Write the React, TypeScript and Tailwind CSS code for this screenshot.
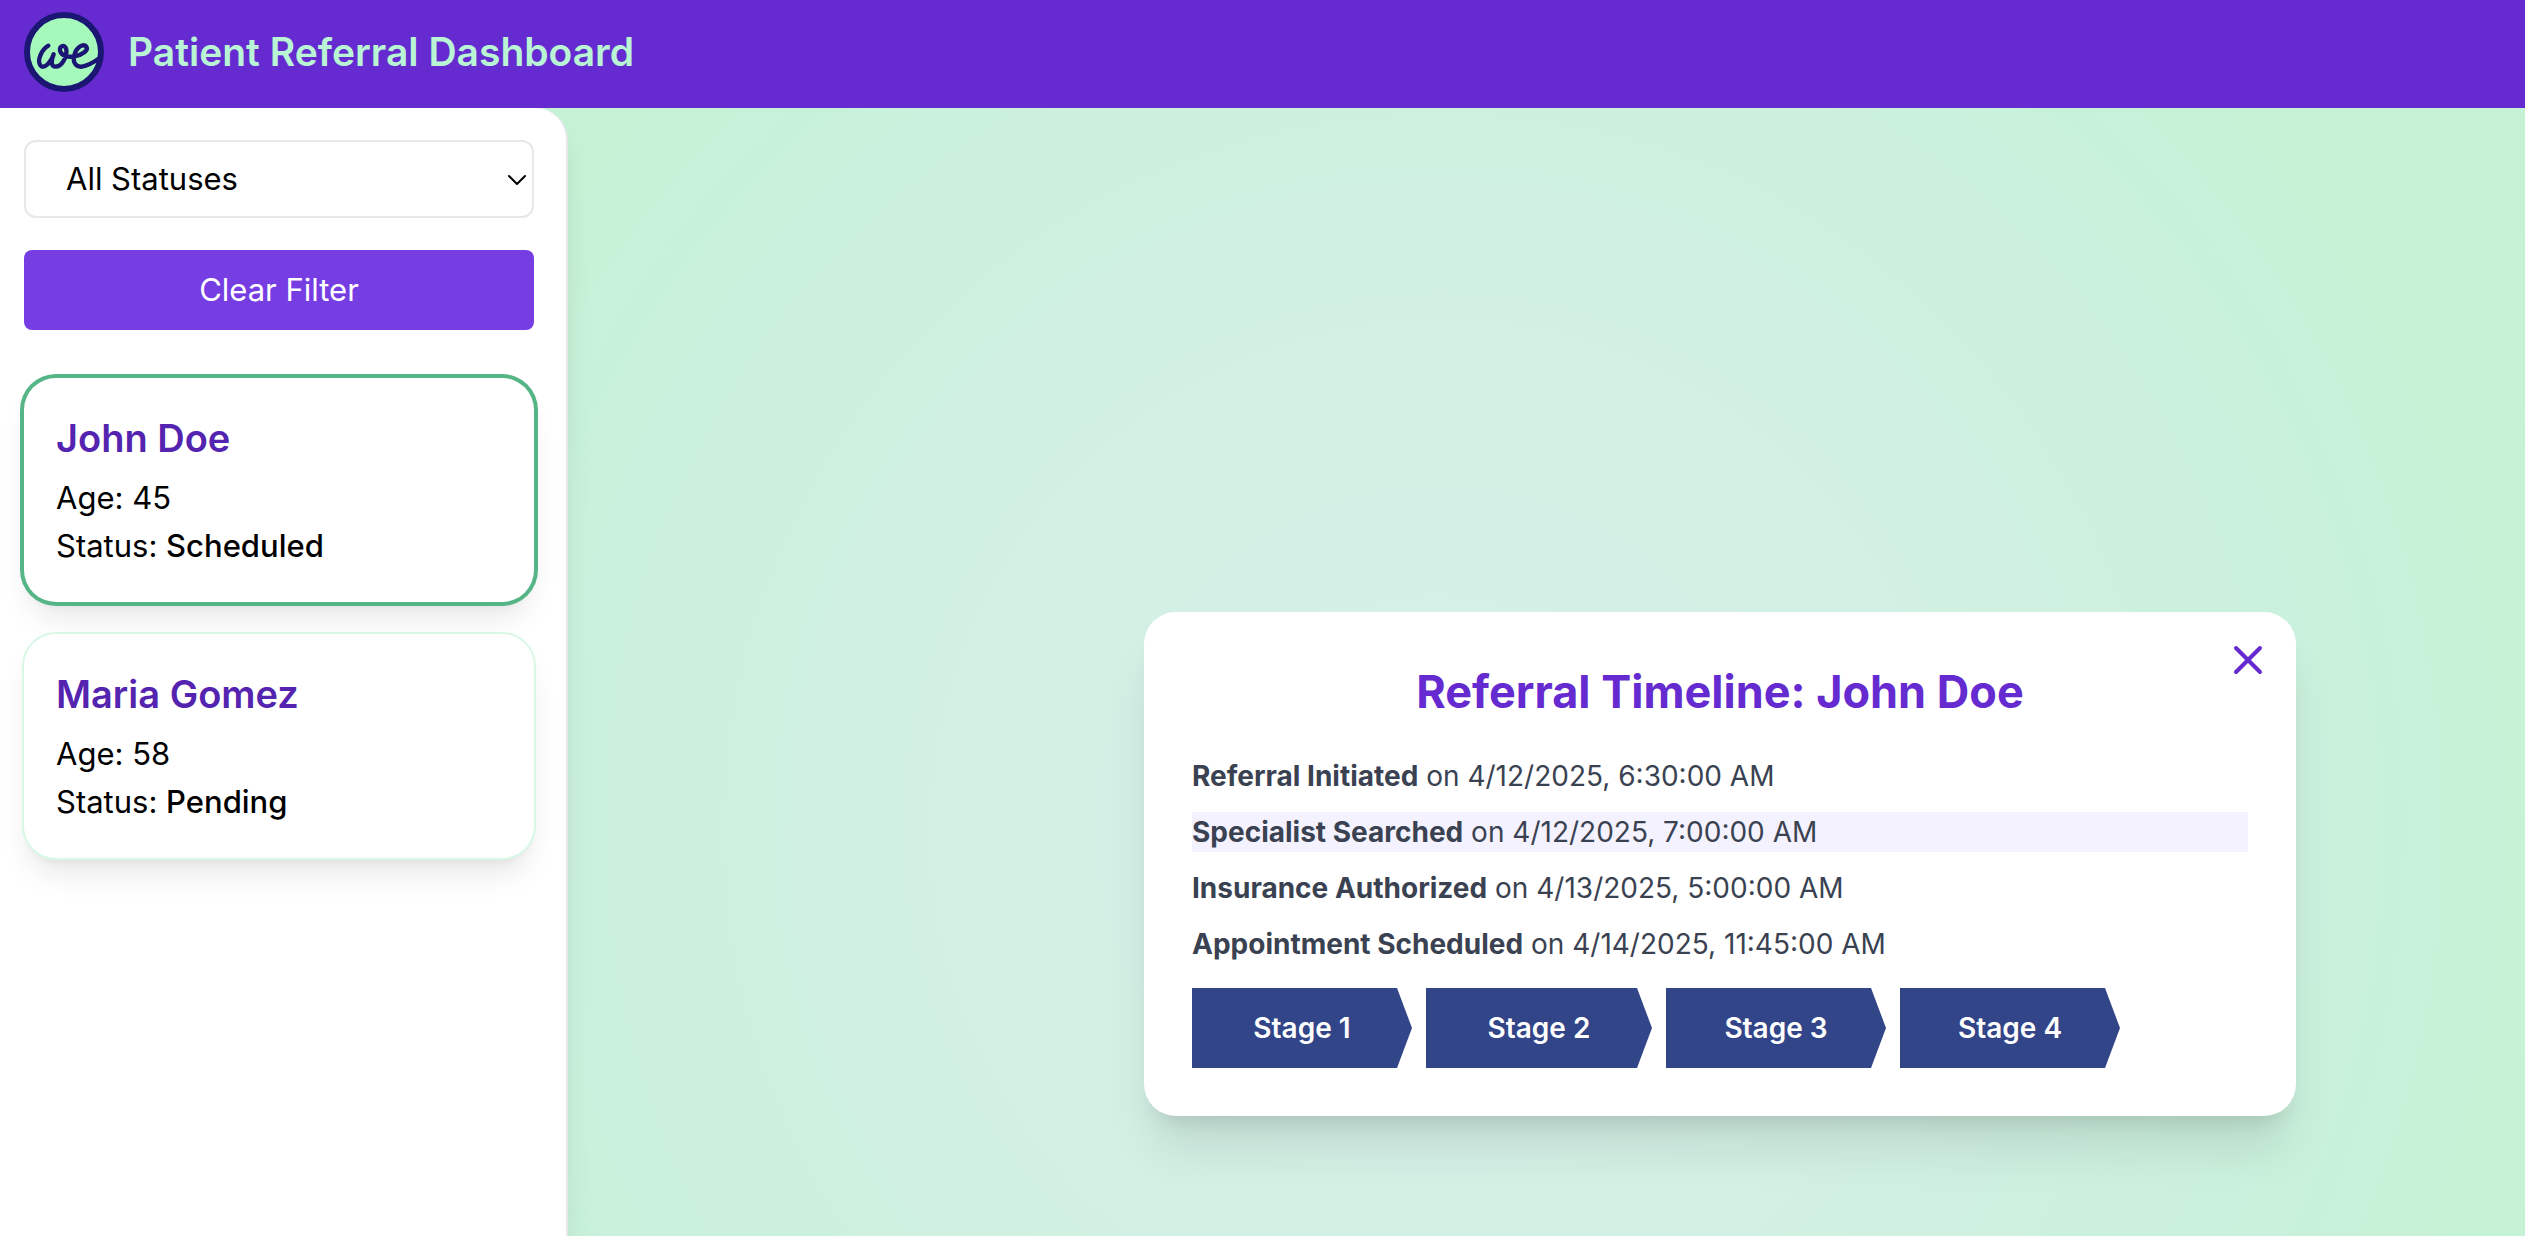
import { useState } from 'react';
import { ChevronDown, X } from 'lucide-react';

type Patient = { name: string; age: number; status: string };
type TimelineEvent = { label: string; date: string; highlighted?: boolean };

const patients: Patient[] = [
  { name: 'John Doe', age: 45, status: 'Scheduled' },
  { name: 'Maria Gomez', age: 58, status: 'Pending' },
];

const events: TimelineEvent[] = [
  { label: 'Referral Initiated', date: '4/12/2025, 6:30:00 AM' },
  { label: 'Specialist Searched', date: '4/12/2025, 7:00:00 AM', highlighted: true },
  { label: 'Insurance Authorized', date: '4/13/2025, 5:00:00 AM' },
  { label: 'Appointment Scheduled', date: '4/14/2025, 11:45:00 AM' },
];

const stages = [
  { label: 'Stage 1', width: 'w-[220px]' },
  { label: 'Stage 2', width: 'w-[226px]' },
  { label: 'Stage 3', width: 'w-[220px]' },
  { label: 'Stage 4', width: 'w-[220px]' },
];

function Logo() {
  return (
    <svg viewBox="0 0 240 240" className="size-20 shrink-0" role="img" aria-label="Logo">
      <circle cx="120" cy="120" r="111" fill="#a5f9ba" stroke="#1b1674" strokeWidth="18" />
      <path
        transform="translate(-42 -21)"
        d="M115 122C94 134 81 166 91 181C99 193 120 178 131 148C122 172 124 185 137 185C156 185 172 154 169 134C166 117 147 121 150 137C153 152 174 158 194 154C218 149 236 136 229 125C220 113 198 128 193 150C187 174 199 187 216 185C237 182 254 170 268 160"
        fill="none"
        stroke="#1b1674"
        strokeWidth="13"
        strokeLinecap="round"
        strokeLinejoin="round"
      />
    </svg>
  );
}

function PatientCard({ patient, selected, onSelect }: { patient: Patient; selected: boolean; onSelect: () => void }) {
  return (
    <button
      type="button"
      onClick={onSelect}
      className={
        'block w-full rounded-[32px] bg-white p-8 text-left text-[31px] leading-[48px] text-black ' +
        (selected
          ? 'shadow-[0_0_0_4px_#56b586,0_20px_30px_-6px_rgba(0,0,0,0.1),0_8px_12px_-8px_rgba(0,0,0,0.1)]'
          : 'shadow-[0_0_0_2px_#d8f8e5,0_20px_30px_-6px_rgba(0,0,0,0.1),0_8px_12px_-8px_rgba(0,0,0,0.1)]')
      }
    >
      <h2 className="mb-2 text-[38px] leading-[56px] font-semibold text-[#5424b0]">{patient.name}</h2>
      <p>Age: {patient.age}</p>
      <p>
        Status: <span className="font-medium">{patient.status}</span>
      </p>
    </button>
  );
}

function Timeline({ name, onClose }: { name: string; onClose: () => void }) {
  return (
    <section className="relative w-full max-w-[1152px] rounded-[32px] bg-white p-12 shadow-[0_40px_50px_-10px_rgba(0,0,0,0.1),0_16px_20px_-12px_rgba(0,0,0,0.1)]">
      <button type="button" aria-label="Close" onClick={onClose} className="absolute top-6 right-6 text-[#652bd0]">
        <X size={48} strokeWidth={2} />
      </button>
      <h2 className="mb-8 text-center text-[45px] leading-[64px] font-bold text-[#652bd0]">Referral Timeline: {name}</h2>
      <ul className="flex flex-col gap-4 text-[28px] leading-[40px] text-[#3a4252]">
        {events.map((event) => (
          <li key={event.label} className={event.highlighted ? 'bg-[#f4f2fe]' : ''}>
            <strong className="font-bold">{event.label}</strong> on {event.date}
          </li>
        ))}
      </ul>
      <ol className="mt-6 flex gap-[14px] text-[28px] font-semibold text-white">
        {stages.map((stage) => (
          <li
            key={stage.label}
            className={
              'flex h-20 items-center justify-center bg-[#324588] [clip-path:polygon(0_0,calc(100%-15px)_0,100%_50%,calc(100%-15px)_100%,0_100%)] ' +
              stage.width
            }
          >
            {stage.label}
          </li>
        ))}
      </ol>
    </section>
  );
}

export default function App() {
  const [status, setStatus] = useState('all');
  const [selected, setSelected] = useState<string | null>('John Doe');
  const shown = patients.filter((p) => status === 'all' || p.status === status);

  return (
    <div className="flex h-screen flex-col overflow-hidden bg-white font-['Inter','Liberation_Sans',sans-serif]">
      <header className="flex items-center gap-6 bg-[#652bd0] px-6 pt-3 pb-4">
        <Logo />
        <h1 className="text-[39px] leading-[56px] font-semibold text-[#b9f4d4]">Patient Referral Dashboard</h1>
      </header>
      <div className="flex min-h-0 flex-1 bg-[radial-gradient(circle_at_57%_64%,#d7f0ea_0%,#d3f0e4_27%,#cdf0df_44%,#c9f1dc_56%,#c6f2d5_68%,#c3f1d2_100%)]">
        <aside className="flex w-[568px] shrink-0 flex-col gap-8 rounded-tr-[32px] border-r-2 border-[#e5e7eb] bg-white py-8 pr-8 pl-6 shadow-[0_20px_30px_-6px_rgba(0,0,0,0.1),0_8px_12px_-8px_rgba(0,0,0,0.1)]">
          <div className="relative">
            <select
              aria-label="Status filter"
              value={status}
              onChange={(e) => setStatus(e.target.value)}
              className="block h-[78px] w-full appearance-none rounded-xl border-2 border-[#e5e7eb] bg-white px-10 text-[31px] text-black"
            >
              <option value="all">All Statuses</option>
              <option value="Scheduled">Scheduled</option>
              <option value="Pending">Pending</option>
            </select>
            <ChevronDown size={32} strokeWidth={1.5} className="pointer-events-none absolute top-6 right-px text-black" />
          </div>
          <button
            type="button"
            onClick={() => setStatus('all')}
            className="mb-4 h-20 rounded-lg bg-[#753de2] text-[31px] text-white"
          >
            Clear Filter
          </button>
          {shown.map((p) => (
            <PatientCard key={p.name} patient={p} selected={p.name === selected} onSelect={() => setSelected(p.name)} />
          ))}
        </aside>
        <main className="flex flex-1 flex-col items-end justify-end pr-[229px] pb-[120px] pl-8">
          {selected && <Timeline name={selected} onClose={() => setSelected(null)} />}
        </main>
      </div>
    </div>
  );
}
